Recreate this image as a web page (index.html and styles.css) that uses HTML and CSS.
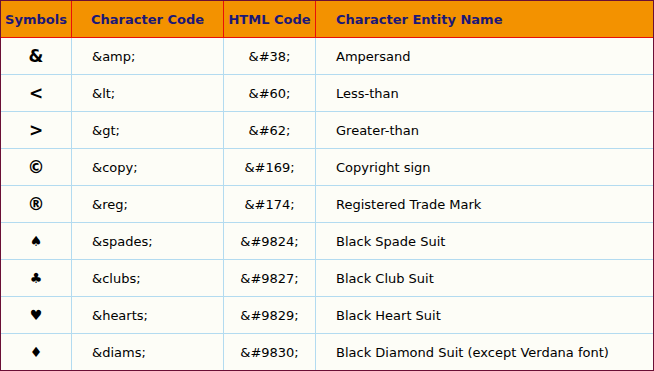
FILE: index.html
```html
<!DOCTYPE html>
<html>
<head>
<meta charset="utf-8">
<link rel="stylesheet" href="styles.css">
</head>
<body>
<div class="table">
  <div class="cell head c1">Symbols</div>
  <div class="cell head c2">Character Code</div>
  <div class="cell head c3">HTML Code</div>
  <div class="cell head c4">Character Entity Name</div>

  <div class="cell sym">&amp;</div>
  <div class="cell code">&amp;amp;</div>
  <div class="cell num">&amp;#38;</div>
  <div class="cell name">Ampersand</div>

  <div class="cell sym">&lt;</div>
  <div class="cell code">&amp;lt;</div>
  <div class="cell num">&amp;#60;</div>
  <div class="cell name">Less-than</div>

  <div class="cell sym">&gt;</div>
  <div class="cell code">&amp;gt;</div>
  <div class="cell num">&amp;#62;</div>
  <div class="cell name">Greater-than</div>

  <div class="cell sym">&copy;</div>
  <div class="cell code">&amp;copy;</div>
  <div class="cell num">&amp;#169;</div>
  <div class="cell name">Copyright sign</div>

  <div class="cell sym">&reg;</div>
  <div class="cell code">&amp;reg;</div>
  <div class="cell num">&amp;#174;</div>
  <div class="cell name">Registered Trade Mark</div>

  <div class="cell sym suit">&spades;</div>
  <div class="cell code">&amp;spades;</div>
  <div class="cell num">&amp;#9824;</div>
  <div class="cell name">Black Spade Suit</div>

  <div class="cell sym suit">&clubs;</div>
  <div class="cell code">&amp;clubs;</div>
  <div class="cell num">&amp;#9827;</div>
  <div class="cell name">Black Club Suit</div>

  <div class="cell sym suit">&hearts;</div>
  <div class="cell code">&amp;hearts;</div>
  <div class="cell num">&amp;#9829;</div>
  <div class="cell name">Black Heart Suit</div>

  <div class="cell sym suit last">&diams;</div>
  <div class="cell code last">&amp;diams;</div>
  <div class="cell num last">&amp;#9830;</div>
  <div class="cell name last">Black Diamond Suit (except Verdana font)</div>
</div>
</body>
</html>
```
FILE: styles.css
```css
html, body {
  margin: 0;
  padding: 0;
  background: #fdfdf7;
}
.table {
  width: 654px;
  height: 371px;
  box-sizing: border-box;
  border: 1px solid #6a0f35;
  display: grid;
  grid-template-columns: 71px 152px 92px 337px;
  grid-template-rows: 37px repeat(8, 37px) 36px;
  font-family: "DejaVu Sans", Verdana, sans-serif;
  font-size: 13px;
  color: #000;
  background: #fdfdf7;
}
.cell {
  box-sizing: border-box;
  display: flex;
  align-items: center;
  border-right: 1px solid #b3dbf0;
  border-bottom: 1px solid #b3dbf0;
  white-space: nowrap;
  overflow: hidden;
}
.cell.last {
  border-bottom: none;
}
.name {
  border-right: none;
  padding-left: 20px;
}
.head {
  background: #f39200;
  color: #1b1878;
  font-weight: bold;
  border-right: 1px solid #e8100a;
  border-bottom: 1px solid #e8100a;
  justify-content: center;
  padding-top: 1px;
}
.head.c4 {
  border-right: none;
  justify-content: flex-start;
  padding-left: 20px;
}
.sym {
  justify-content: center;
  font-weight: bold;
  font-size: 17px;
}
.suit {
  font-size: 14px;
  font-weight: normal;
}
.code {
  padding-left: 20px;
}
.num {
  justify-content: center;
}
```
